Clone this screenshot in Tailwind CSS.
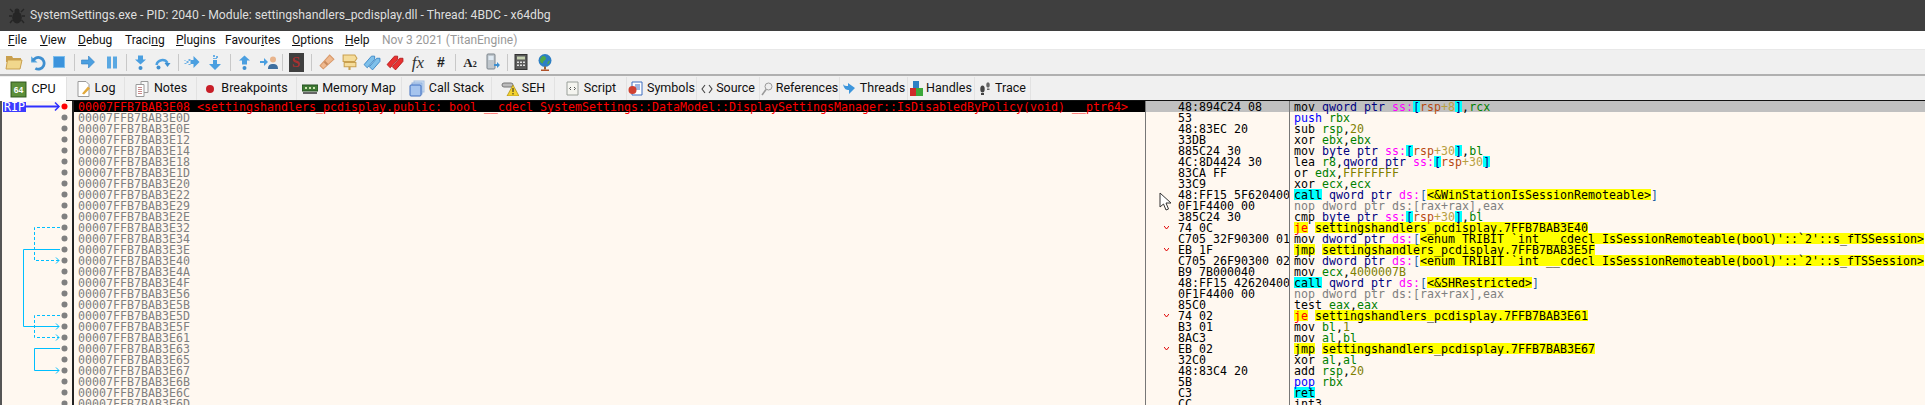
<!DOCTYPE html>
<html lang="en">
<head>
  <meta charset="UTF-8">
  <title>x64dbg</title>
  <script src="https://cdn.jsdelivr.net/npm/@tailwindcss/browser@4"></script>
</head>
<body class="w-[1925px] h-[405px] overflow-hidden bg-[#f0f0f0] flex flex-col relative">
  <!-- title bar -->
  <div class="h-[31px] bg-[#3f3f3f] flex items-center pl-[8px] gap-[4px] shrink-0">
    <svg width="18" height="18" viewBox="0 0 18 18"><g stroke="#262626" stroke-width="1.4" fill="none"><path d="M5 5 2 2M13 5l3-3M4 9H1M14 9h3M4.500 13 2 16M13.500 13l2.500 3"/></g><ellipse cx="9" cy="10.500" rx="4.800" ry="6" fill="#262626"/><circle cx="9" cy="4" r="2.500" fill="#262626"/></svg>
    <span class="font-['Roboto'] text-[12.2px] text-[#dedede] whitespace-nowrap">SystemSettings.exe - PID: 2040 - Module: settingshandlers_pcdisplay.dll - Thread: 4BDC - x64dbg</span>
  </div>
  <!-- menu -->
  <div class="h-[19px] bg-white flex items-center font-['Roboto'] text-[12px] text-[#111] shrink-0 relative border-b border-[#e8e8e8]">
    <span class="w-[32px] ml-[8px]"><u>F</u>ile</span>
    <span class="w-[38px]"><u>V</u>iew</span>
    <span class="w-[47px]"><u>D</u>ebug</span>
    <span class="w-[51px]">Traci<u>n</u>g</span>
    <span class="w-[49px]"><u>P</u>lugins</span>
    <span class="w-[67px]">Favour<u>i</u>tes</span>
    <span class="w-[53px]"><u>O</u>ptions</span>
    <span class="w-[37px]"><u>H</u>elp</span>
    <span class="text-[#999]">Nov 3 2021 (TitanEngine)</span>
  </div>
  <!-- toolbar -->
  <div class="h-[26px] shrink-0 flex items-center pl-[3px] border-b-2 border-[#b0b0b0] bg-[#f0f0f0]">
    <div class="w-[22px] flex justify-center"><svg width="18" height="16" viewBox="0 0 18 16"><path d="M1 2h6l1 2h8v4H1z" fill="#c9a04f"/><path d="M1 15 2.500 6H17l-2 9z" fill="#f1d78c" stroke="#c9a04f"/></svg></div>
    <div class="w-[22px] ml-[1px] flex justify-center"><svg width="17" height="17" viewBox="0 0 16 16"><path d="M2 2v6h6" fill="#5aa9e0"/><path d="M3.500 7A5.500 5.500 0 1 1 6 13.500" fill="none" stroke="#3e8fd0" stroke-width="2.600"/></svg></div>
    <div class="w-[22px] flex justify-center"><svg width="14" height="14" viewBox="0 0 14 14"><rect x="1.500" y="1.500" width="11" height="11" fill="#3b93dc" stroke="#7cbdec"/></svg></div>
    <div class="w-px h-[17px] bg-[#c8c8c8] ml-[4px]"></div>
    <div class="w-[22px] ml-[2px] flex justify-center"><svg width="16" height="14" viewBox="0 0 15 14"><path d="M1 5h7V1l6 6-6 6V9H1z" fill="#4b9fe0" stroke="#2f80c4" stroke-width=".6"/></svg></div>
    <div class="w-[22px] ml-[2px] flex justify-center"><svg width="14" height="15" viewBox="0 0 14 14"><rect x="2" y="1" width="4" height="12" fill="#5aa8e2"/><rect x="8" y="1" width="4" height="12" fill="#5aa8e2"/></svg></div>
    <div class="w-px h-[17px] bg-[#c8c8c8] ml-[3px]"></div>
    <div class="w-[22px] ml-[2px] flex justify-center"><svg width="15" height="17" viewBox="0 0 15 16"><path d="M5 1h5v4h3l-5.500 5L2 5h3z" fill="#4b9fe0"/><circle cx="7.500" cy="13.500" r="2" fill="#3e8fd0"/></svg></div>
    <div class="w-[22px] ml-[1px] flex justify-center"><svg width="18" height="15" viewBox="0 0 17 15"><path d="M2 10a6 6 0 0 1 11-2" fill="none" stroke="#4b9fe0" stroke-width="2.500"/><path d="M10 8h6l-3 4z" fill="#3e8fd0"/><circle cx="4" cy="12.500" r="2" fill="#3e8fd0"/></svg></div>
    <div class="w-px h-[17px] bg-[#c8c8c8] ml-[4px]"></div>
    <div class="w-[22px] ml-[2px] flex justify-center"><svg width="18" height="14" viewBox="0 0 17 14"><path d="M7 5h3V1l6 6-6 6V9H7z" fill="#4b9fe0"/><path d="M1 5h1v1H1zm2 1h2v2H3zm2-2h2v2H5zM1 8h2v1H1zm4 1h2v1H5z" fill="#6bb0e6"/></svg></div>
    <div class="w-[22px] ml-[1px] flex justify-center"><svg width="16" height="18" viewBox="0 0 16 16"><path d="M6 6h4v4h4l-6 6-6-6h4z" fill="#4b9fe0"/><path d="M6 1h2v2H6zm3 1h2v2H9zM6 4h4v1H6z" fill="#6bb0e6"/></svg></div>
    <div class="w-px h-[17px] bg-[#c8c8c8] ml-[4px]"></div>
    <div class="w-[22px] ml-[2px] flex justify-center"><svg width="15" height="17" viewBox="0 0 15 16"><path d="M7.500 1 13 6h-3v4H5V6H2z" fill="#4b9fe0"/><circle cx="7.500" cy="13.500" r="2" fill="#3e8fd0"/></svg></div>
    <div class="w-[22px] ml-[3px] flex justify-center"><svg width="18" height="15" viewBox="0 0 18 15"><path d="M0 6h4V3l4 4-4 4V8H0z" fill="#4b9fe0"/><circle cx="13" cy="4.500" r="3" fill="#e8b48c"/><path d="M8 14c0-4 2-5 5-5s5 1 5 5z" fill="#3e6fa0"/></svg></div>
    <div class="w-px h-[17px] bg-[#c8c8c8] ml-[2px]"></div>
    <div class="w-[22px] ml-[2px] flex justify-center"><div class="w-[15px] h-[19px] bg-[#3f3f3f] text-[#a83030] font-['Liberation_Serif'] font-bold text-[15px] leading-[19px] text-center">S</div></div>
    <div class="w-px h-[17px] bg-[#c8c8c8] ml-[4px]"></div>
    <div class="w-[22px] ml-[4px] flex justify-center"><svg width="18" height="18" viewBox="0 0 17 17"><path d="m2 12 9-10 4 4-10 9z" fill="#efb98f" stroke="#d99a6c"/><path d="m6 8 3 3" stroke="#c98a5c" stroke-width="2"/></svg></div>
    <div class="w-[22px] flex justify-center"><svg width="17" height="17" viewBox="0 0 16 16"><path d="M2 1h11l2 3-2 3H2zM3 8h11v4H3z" fill="#f5dc9a" stroke="#c9a04f"/><path d="M7 12h2v3H7z" fill="#c9a04f"/></svg></div>
    <div class="w-[22px] ml-[1px] flex justify-center"><svg width="18" height="17" viewBox="0 0 17 16"><path d="m1 10 7-8h3v3l-7 8zm5 2 7-8h3v3l-7 8z" fill="#7fc0ea" stroke="#2f80c4" stroke-width=".8"/></svg></div>
    <div class="w-[22px] ml-[1px] flex justify-center"><svg width="18" height="17" viewBox="0 0 17 16"><path d="m1 10 7-8h3v3l-7 8zm5 2 7-8h3v3l-7 8z" fill="#e83030" stroke="#b01818" stroke-width=".8"/></svg></div>
    <div class="w-[22px] ml-[1px] flex justify-center font-['Liberation_Serif'] italic text-[17px] text-[#333] leading-none">fx</div>
    <div class="w-[22px] ml-[1px] flex justify-center font-['Liberation_Sans'] font-bold text-[14px] text-[#222] leading-none">#</div>
    <div class="w-px h-[17px] bg-[#c8c8c8] ml-[3px]"></div>
    <div class="w-[22px] ml-[3px] flex justify-center font-['Liberation_Serif'] font-bold text-[13px] text-[#222] leading-none">A<span class="text-[8px] self-end">2</span></div>
    <div class="w-[22px] ml-[1px] flex justify-center"><svg width="16" height="18" viewBox="0 0 16 18"><rect x="2" y="1" width="8" height="15" rx="1" fill="#bfc6cc" stroke="#7c858c"/><rect x="3.500" y="3" width="5" height="4" fill="#dfeaf3"/><path d="M9 11h3V9l3 3-3 3v-2H9z" fill="#3e8fd0"/></svg></div>
    <div class="w-px h-[17px] bg-[#c8c8c8] ml-[3px]"></div>
    <div class="w-[22px] ml-[2px] flex justify-center"><svg width="16" height="18" viewBox="0 0 16 17"><rect x="2" y="1" width="12" height="15" fill="#5a5a5a" stroke="#333"/><rect x="4" y="3" width="8" height="3" fill="#c4d0b0"/><path d="M4 8h2v1.500H4zm3 0h2v1.500H7zm3 0h2v1.500h-2zm-6 3h2v1.500H4zm3 0h2v1.500H7zm3 0h2v1.500h-2z" fill="#ddd"/></svg></div>
    <div class="w-[22px] ml-[2px] flex justify-center"><svg width="16" height="19" viewBox="0 0 16 18"><circle cx="8" cy="7" r="6.500" fill="#2d7fc4"/><path d="M5 3c2-1 4 0 4 2s-3 2-3 4-3 0-3-2 1-3 2-4zm6 5 2-1-1 3-2 1z" fill="#4da84a"/><path d="M4 16h8v1.500H4z" fill="#b0522a"/><path d="M7 13h2v3H7z" fill="#a06030"/></svg></div>
  </div>
  <!-- tabs -->
  <div class="h-[25px] shrink-0 flex items-stretch font-['Roboto'] text-[12.5px] text-[#111] border-b border-[#111] bg-[#f0f0f0] pt-[1px]">
    <div class="w-[66px] bg-white flex items-center justify-center gap-[4px] -mb-px"><svg width="17" height="17" viewBox="0 0 16 16"><rect x="1" y="1" width="14" height="14" fill="#5c8f3a" stroke="#2f5a1c"/><text x="8" y="11" font-size="8" font-weight="700" fill="#fff" text-anchor="middle" font-family="Liberation Sans">64</text></svg>CPU</div>
    <div class="w-[59px] border-x border-[#e2e2e2] flex items-center justify-center gap-[3px]"><svg width="16" height="18" viewBox="0 0 16 17"><path d="M2 1h8l3 3v12H2z" fill="#fff" stroke="#9a9a9a"/><path d="m6 13 6-7 2 2-6 6z" fill="#e2a93a"/></svg>Log</div>
    <div class="w-[72px] border-r border-[#e2e2e2] flex items-center justify-center gap-[4px]"><svg width="16" height="18" viewBox="0 0 16 17"><path d="M7 1h7v11H7z" fill="#f8f8f8" stroke="#9a9a9a"/><path d="M2 4h8v12H2z" fill="#fff" stroke="#9a9a9a"/><path d="M4 7h4M4 9h4M4 11h4M4 13h4" stroke="#c98a8a"/></svg>Notes</div>
    <div class="w-[100px] border-r border-[#e2e2e2] flex items-center justify-center gap-[6px]"><svg width="10" height="10" viewBox="0 0 10 10"><circle cx="5" cy="5" r="4" fill="#c81e28"/></svg>Breakpoints</div>
    <div class="w-[105px] border-r border-[#e2e2e2] flex items-center justify-center gap-[4px]"><svg width="16" height="10" viewBox="0 0 16 10"><rect y="1" width="16" height="6" fill="#3f7a35" stroke="#234f1e"/><path d="M1 8h14v2H1z" fill="#666"/><path d="M3 3h2v2H3zm4 0h2v2H7zm4 0h2v2h-2z" fill="#cde3b0"/></svg>Memory Map</div>
    <div class="w-[90px] border-r border-[#e2e2e2] flex items-center justify-center gap-[4px]"><svg width="16" height="17" viewBox="0 0 16 17"><rect x="5" y="1" width="10" height="11" fill="#cfe0f5" stroke="#a8c0e0"/><rect x="3" y="3" width="10" height="11" fill="#b8d0f0" stroke="#8fb0dc"/><rect x="1" y="5" width="11" height="11" rx="1" fill="#a5c4ee" stroke="#3e6fc0"/></svg>Call Stack</div>
    <div class="w-[63px] border-r border-[#e2e2e2] flex items-center justify-center gap-[3px]"><svg width="18" height="14" viewBox="0 0 18 14"><rect x="1" y="1" width="11" height="4" rx="2" fill="#bbb" stroke="#777"/><path d="m12 3 6 11H6z" fill="#f4d22e" stroke="#a88a10" stroke-width=".7"/><path d="M11.500 6h1v4h-1zm0 5h1v1.500h-1z" fill="#222"/></svg>SEH</div>
    <div class="w-[72px] border-r border-[#e2e2e2] flex items-center justify-center gap-[4px]"><svg width="15" height="17" viewBox="0 0 15 17"><path d="M2 2h11v13H2z" fill="#f5f5f0" stroke="#9aa09a"/><path d="M6 7 4.500 8.500 6 10m3-3 1.500 1.500L9 10" fill="none" stroke="#555"/></svg>Script</div>
    <div class="w-[70px] border-r border-[#e2e2e2] flex items-center justify-center gap-[4px]"><svg width="15" height="16" viewBox="0 0 15 16"><path d="M4 1h10v13H4z" fill="#fff" stroke="#3e6fc0"/><path d="M7 4h5M7 6h5M7 8h5" stroke="#3e6fc0"/><circle cx="4.500" cy="9" r="4" fill="#d04030"/></svg>Symbols</div>
    <div class="w-[63px] border-r border-[#e2e2e2] flex items-center justify-center gap-[3px]"><svg width="12" height="10" viewBox="0 0 12 10"><path d="M4 1 1 5l3 4m4-8 3 4-3 4" fill="none" stroke="#444" stroke-width="1.100"/></svg>Source</div>
    <div class="w-[80px] border-r border-[#e2e2e2] flex items-center justify-center gap-[3px]"><svg width="12" height="14" viewBox="0 0 12 14"><circle cx="7.500" cy="4.500" r="3.500" fill="#eee" stroke="#999"/><path d="M5 7.500 1 13" stroke="#999" stroke-width="1.600"/></svg>References</div>
    <div class="w-[68px] border-r border-[#e2e2e2] flex items-center justify-center gap-[3px]"><svg width="15" height="12" viewBox="0 0 15 12"><path d="M6 3V0l7 5-6 6V7C4 7 2 6 1 1c1 2 3 2 5 2z" fill="#3d96dc"/></svg>Threads</div>
    <div class="w-[67px] border-r border-[#e2e2e2] flex items-center justify-center gap-[3px]"><svg width="13" height="17" viewBox="0 0 13 17"><rect x="3" y="1" width="6" height="7" fill="#2d7fc4"/><rect x="0" y="8" width="7" height="8" fill="#d02a2a"/><rect x="6" y="8" width="7" height="8" fill="#3da83a"/></svg>Handles</div>
    <div class="w-[56px] border-r border-[#e2e2e2] flex items-center justify-center gap-[4px]"><svg width="12" height="15" viewBox="0 0 12 15"><ellipse cx="3.500" cy="8" rx="2.200" ry="3.500" fill="#444"/><rect x="2" y="12" width="3" height="2" fill="#444"/><ellipse cx="9" cy="4" rx="1.800" ry="2.800" fill="#666"/><rect x="8" y="7.500" width="2.500" height="1.500" fill="#666"/></svg>Trace</div>
  </div>
  <!-- disassembly -->
  <div class="flex-1 flex bg-[#fff8f0] overflow-hidden font-['DejaVu_Sans_Mono'] text-[11.6px] leading-[12px] tracking-[0.02px] whitespace-pre">
    <div class="w-[74px] shrink-0 relative border-l-2 border-r-[2px] border-l-[#555] border-r-[#222]">
      <span class="absolute left-[1px] top-[1px] bg-[#3c3cff] text-white h-[10px] leading-[10px] px-px">RIP</span>
      <svg id="jumps" class="absolute left-[-2px] top-0" width="72" height="304"></svg>
    </div>
    <div id="rows" class="flex-1 flex flex-col min-w-0"></div>
  </div>
  <!-- mouse pointer -->
  <svg class="absolute left-[1159px] top-[192px] z-50" width="13" height="19" viewBox="0 0 13 19"><path d="M1 1v14l3.500-3 2.500 6 2.500-1-2.500-6H12z" fill="#fff" stroke="#333"/></svg>

  <script>
    const addrs = ["E08","E0D","E0E","E12","E14","E18","E1D","E20","E22","E29","E2E","E32","E34","E3E","E40","E4A","E4F","E56","E5B","E5D","E5F","E61","E63","E65","E67","E6B","E6C","E6D"];
    const bytes = ["48:894C24 08","53","48:83EC 20","33DB","885C24 30","4C:8D4424 30","83CA FF","33C9","48:FF15 5F620400","0F1F4400 00","385C24 30","74 0C","C705 32F90300 01","EB 1F","C705 26F90300 02","B9 7B000040","48:FF15 42620400","0F1F4400 00","85C0","74 02","B3 01","8AC3","EB 02","32C0","48:83C4 20","5B","C3","CC"];

    const K = {
      t: "text-[#000000]",
      p: "text-[#000080]",
      s: "text-[#ff00ff]",
      b: "text-[#000080] bg-[#00ffff]",
      x: "text-[#2060a0]",
      o: "text-[#b84a10]",
      n: "text-[#b8a040]",
      g: "text-[#008000]",
      v: "text-[#808000]",
      u: "text-[#0000ff]",
      c: "text-[#000000] bg-[#00ffff]",
      y: "text-[#000000] bg-[#ffff00]",
      r: "text-[#ff0000] bg-[#ffff00]",
      a: "text-[#808080]"
    };
    const esc = s => s.replace(/&/g, "&amp;").replace(/</g, "&lt;").replace(/>/g, "&gt;");
    const ssMem = (ptr, off) => [[" "+ptr+" ptr ","p"],["ss:","s"],["[","b"],["rsp","o"],["+"+off,"n"],["]","b"]];
    const tribit = "<enum TRIBIT `int __cdecl IsSessionRemoteable(bool)'::`2'::s_fTSSession>";
    const nop = [["nop dword ptr ds:[rax+rax],eax","a"]];
    const jump = (op, kind, to) => [[op, kind],[" ","t"],["settingshandlers_pcdisplay.7FFB7BAB3"+to,"y"]];
    const call = (name) => [["call","c"],[" qword ptr ","p"],["ds:","s"],["[","x"],[name,"y"],["]","x"]];
    const store = (v) => [["mov","t"],[" dword ptr ","p"],["ds:","s"],["[","x"],[tribit,"y"],["]","x"],[",","t"],[v,"v"]];
    const ins = [
      [["mov","t"],...ssMem("qword","8"),[",","t"],["rcx","g"]],
      [["push","u"],[" ","t"],["rbx","g"]],
      [["sub ","t"],["rsp","g"],[",","t"],["20","v"]],
      [["xor ","t"],["ebx","g"],[",","t"],["ebx","g"]],
      [["mov","t"],...ssMem("byte","30"),[",","t"],["bl","g"]],
      [["lea ","t"],["r8","g"],[",","t"],["qword ptr ","p"],["ss:","s"],["[","b"],["rsp","o"],["+30","n"],["]","b"]],
      [["or ","t"],["edx","g"],[",","t"],["FFFFFFFF","v"]],
      [["xor ","t"],["ecx","g"],[",","t"],["ecx","g"]],
      call("<&WinStationIsSessionRemoteable>"),
      nop,
      [["cmp","t"],...ssMem("byte","30"),[",","t"],["bl","g"]],
      jump("je","r","E40"),
      store("1"),
      jump("jmp","y","E5F"),
      store("2"),
      [["mov ","t"],["ecx","g"],[",","t"],["4000007B","v"]],
      call("<&SHRestricted>"),
      nop,
      [["test ","t"],["eax","g"],[",","t"],["eax","g"]],
      jump("je","r","E61"),
      [["mov ","t"],["bl","g"],[",","t"],["1","v"]],
      [["mov ","t"],["al","g"],[",","t"],["bl","g"]],
      jump("jmp","y","E67"),
      [["xor ","t"],["al","g"],[",","t"],["al","g"]],
      [["add ","t"],["rsp","g"],[",","t"],["20","v"]],
      [["pop","u"],[" ","t"],["rbx","g"]],
      [["ret","c"]],
      [["int3","t"]]
    ];
    const jumpRows = [11, 13, 19, 22];
    const chevron = '<svg class="ml-[18px] mt-[4px]" width="5" height="4" viewBox="0 0 5 4"><path d="M0 0l2.500 3L5 0" fill="none" stroke="#e00000"/></svg>';

    let html = "";
    addrs.forEach((a, i) => {
      const first = i === 0;
      const addrText = first
        ? "00007FFB7BAB3E08 <settingshandlers_pcdisplay.public: bool __cdecl SystemSettings::DataModel::DisplaySettingsManager::IsDisabledByPolicy(void) __ptr64>"
        : "00007FFB7BAB3" + a;
      const tokens = ins[i].map(t => `<span class="inline-block align-top h-[11px] ${K[t[1]]}">${esc(t[0])}</span>`).join("");
      // earlier rows stay on top so underscores aren't painted over by the next row's highlight
      html += `<div class="relative h-[11px] shrink-0 flex ${first ? "bg-[#c0c0c0]" : ""}" style="z-index:${40 - i}">
        <div class="w-[1071px] h-[11px] shrink-0 pl-[4px] overflow-x-clip ${first ? "bg-black text-[#ff0000]" : "text-[#808080]"}">${esc(addrText)}</div>
        <div class="w-[144px] h-[11px] shrink-0 overflow-x-clip border-l border-[#777] text-[#000000] flex"><span class="w-[32px] shrink-0">${jumpRows.includes(i) ? chevron : ""}</span><span>${bytes[i]}</span></div>
        <div class="flex-1 min-w-0 h-[11px] overflow-x-clip border-l border-[#777] pl-[4px]">${tokens}</div>
      </div>`;
    });
    document.getElementById("rows").innerHTML = html;

    // jump lines and bullets in the gutter
    const cy = i => 5.5 + 11 * i;
    const blue = "#00bfff";
    let g = "";
    addrs.forEach((a, i) => {
      g += `<circle cx="64.500" cy="${cy(i)}" r="3" fill="${i === 0 ? "#ff0000" : "#808080"}"/>`;
    });
    const link = (from, to, x, dash) => {
      const d = dash ? 'stroke-dasharray="3 2"' : "";
      g += `<path d="M60 ${cy(from)}H${x}V${cy(to)}H59" fill="none" stroke="${blue}" ${d}/>`;
      g += `<path d="M56 ${cy(to) - 3}l3 3-3 3" fill="none" stroke="${blue}"/>`;
    };
    link(11, 14, 34.5, true);
    link(13, 20, 23.5, false);
    link(19, 21, 34.5, true);
    link(22, 24, 34.5, false);
    g += `<path d="M25 5.500H59" stroke="#3030ff" stroke-width="2"/><path d="M55 1.500l4 4-4 4" fill="none" stroke="#3030ff" stroke-width="1.500"/>`;
    document.getElementById("jumps").innerHTML = g;
  </script>
</body>
</html>
